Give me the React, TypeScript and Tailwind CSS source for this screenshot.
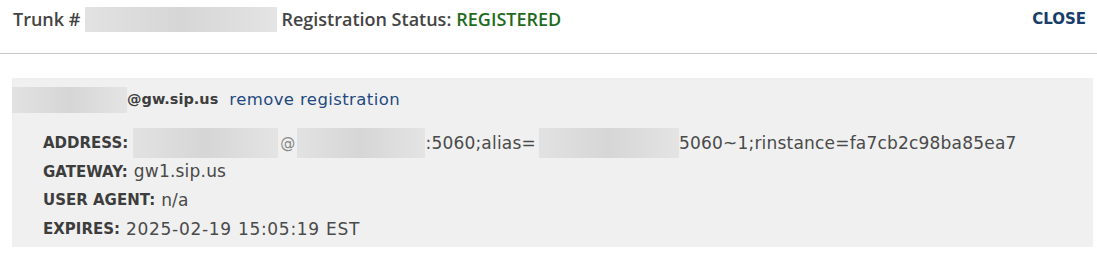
import React from 'react';

// Redacted value — a soft grey smudge like the blurred original
function Redacted({ w, h, className = '' }: { w: string; h: string; className?: string }) {
  return (
    <span
      className={`inline-block shrink-0 ${w} ${h} bg-gradient-to-r from-[#e2e2e2] via-[#d6d6d6] to-[#e4e4e4] ${className}`}
    />
  );
}

function DetailRow({ label, children, wide }: { label: string; children: React.ReactNode; wide?: boolean }) {
  return (
    <div className="flex items-center h-[28.7px] whitespace-nowrap">
      <span className="font-['DejaVu_Sans',sans-serif] font-bold text-[15px] text-[#3d3d3d] mr-[6px]">{label}</span>
      <span
        className={`flex items-center font-['DejaVu_Sans',sans-serif] text-[17px] text-[#4a4a4a] ${
          wide ? 'tracking-[0.7px]' : 'tracking-[0.2px]'
        }`}
      >
        {children}
      </span>
    </div>
  );
}

export default function App() {
  return (
    <div className="w-[1097px] h-[277px] bg-white overflow-hidden">
      {/* ── Header ── */}
      <div className="h-[54px] border-b border-[#c6c6c6] flex items-start justify-between pl-[13px] pr-[11px] pt-[7px]">
        <div className="flex items-center h-[25px] font-['Open_Sans',sans-serif] font-semibold text-[18px] text-[#444] whitespace-nowrap">
          <span>Trunk #</span>
          <Redacted w="w-[192px]" h="h-[25px]" className="ml-[5px] mr-[4px]" />
          <span>Registration Status:</span>
          <span className="ml-[5px] text-[#1d6b1d]">REGISTERED</span>
        </div>
        <button className="h-[25px] flex items-center font-['DejaVu_Sans',sans-serif] font-bold text-[15px] text-[#173d6b]">
          CLOSE
        </button>
      </div>

      {/* ── Registration details ── */}
      <div className="mt-[24px] ml-[12px] mr-[4px] h-[169px] bg-[#f0f0f0] pt-[9px]">
        <div className="flex items-center h-[26px] whitespace-nowrap">
          <Redacted w="w-[115px]" h="h-[26px]" />
          <span className="font-['DejaVu_Sans',sans-serif] font-bold text-[14.5px] text-[#3d3d3d]">@gw.sip.us</span>
          <a className="ml-[11px] font-['DejaVu_Sans',sans-serif] text-[16.5px] tracking-[0.4px] text-[#1f4a7f] cursor-pointer">
            remove registration
          </a>
        </div>

        <div className="mt-[16px] pl-[31px]">
          <DetailRow label="ADDRESS:">
            <Redacted w="w-[145px]" h="h-[30px]" className="-ml-[1px]" />
            <span className="text-[#888] text-[15px] mx-[2px]">@</span>
            <Redacted w="w-[128px]" h="h-[30px]" />
            <span>:5060;alias=</span>
            <Redacted w="w-[140px]" h="h-[30px]" className="ml-[3px]" />
            <span>5060~1;rinstance=fa7cb2c98ba85ea7</span>
          </DetailRow>
          <DetailRow label="GATEWAY:">gw1.sip.us</DetailRow>
          <DetailRow label="USER AGENT:">n/a</DetailRow>
          <DetailRow label="EXPIRES:" wide>
            2025-02-19 15:05:19 EST
          </DetailRow>
        </div>
      </div>
    </div>
  );
}
